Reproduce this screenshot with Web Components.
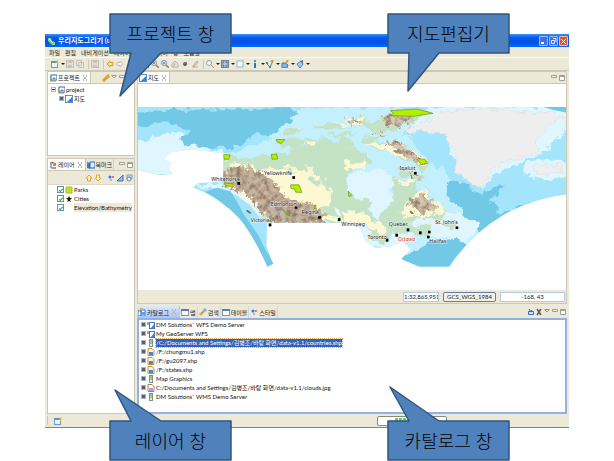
<!DOCTYPE html>
<html lang="ko">
<head>
<meta charset="utf-8">
<title>우리지도그리기</title>
<style>
  body {
    margin: 0; box-sizing: border-box; min-height: 100vh; background: #fff;
    padding: 34px 45px 33px; display: flex; flex-direction: column; position: relative;
    font: 6px/9px Lato, "Noto Sans CJK KR", sans-serif; color: #111;
  }
</style>
</head>
<body>
<app-window></app-window>
<call-out label="프로젝트 창" style="left:110px;top:14px" tail="21,39 10,82 51,39"></call-out>
<call-out label="지도편집기" style="right:105px;top:14px" tail="21,39 20,77 51,39"></call-out>
<call-out label="레이어 창" style="left:110px;bottom:1px" tail="51,0 5,-31 21,0"></call-out>
<call-out label="카탈로그 창" style="right:105px;bottom:1px" tail="51,0 2,-34 21,0"></call-out>

<template id="t-window">
  <style>
    :host { flex: 1; display: flex; flex-direction: column; background: #ece9d8; border-bottom: 1px solid #4a8ce8; }
    main { flex: 1; display: grid; grid-template-columns: 88px minmax(0, 1fr); gap: 2px; padding: 0 2px; }
    .left { display: grid; grid-template-rows: 85px 1fr; gap: 2px; }
    .right { display: grid; grid-template-rows: 1fr 108px; gap: 2px; }
    .tree { padding: 1px 3px; }
    .layers { padding: 0 9px; }
    .catalog { padding: 0 2px; }
  </style>
  <title-bar></title-bar>
  <menu-bar></menu-bar>
  <tool-bar></tool-bar>
  <main>
    <div class="left">
      <view-pane>
        <view-tab slot="tabs" icon="project" active closable>프로젝트</view-tab>
        <ui-icon slot="tools" name="link"></ui-icon>
        <ui-icon slot="tools" name="menu"></ui-icon>
        <ui-icon slot="tools" name="min"></ui-icon>
        <ui-icon slot="tools" name="max"></ui-icon>
        <div class="tree">
          <tree-row icon="project" open>project</tree-row>
          <tree-row icon="map" depth="1">지도</tree-row>
        </div>
      </view-pane>
      <view-pane>
        <view-tab slot="tabs" icon="layers" active closable>레이어</view-tab>
        <view-tab slot="tabs" icon="book">북마크</view-tab>
        <ui-icon slot="tools" name="min"></ui-icon>
        <ui-icon slot="tools" name="max"></ui-icon>
        <layer-tools></layer-tools>
        <div class="layers">
          <layer-row icon="square">Parks</layer-row>
          <layer-row icon="star">Cities</layer-row>
          <layer-row icon="none" current>Elevation/Bathymetry</layer-row>
        </div>
      </view-pane>
    </div>
    <div class="right">
      <view-pane>
        <view-tab slot="tabs" icon="map" active closable>지도</view-tab>
        <ui-icon slot="tools" name="min"></ui-icon>
        <ui-icon slot="tools" name="max"></ui-icon>
        <map-canvas></map-canvas>
        <map-status></map-status>
      </view-pane>
      <view-pane focused>
        <view-tab slot="tabs" icon="catalog" active closable focused>카탈로그</view-tab>
        <view-tab slot="tabs" icon="window">맵</view-tab>
        <view-tab slot="tabs" icon="torch">검색</view-tab>
        <view-tab slot="tabs" icon="window">테이블</view-tab>
        <view-tab slot="tabs" icon="palette">스타일</view-tab>
        <ui-icon slot="tools" name="import"></ui-icon>
        <ui-icon slot="tools" name="delete"></ui-icon>
        <ui-icon slot="tools" name="menu"></ui-icon>
        <ui-icon slot="tools" name="min"></ui-icon>
        <ui-icon slot="tools" name="max"></ui-icon>
        <div class="catalog">
          <tree-row icon="wfs">DM Solutions` WFS Demo Server</tree-row>
          <tree-row icon="wfs">My GeoServer WFS</tree-row>
          <tree-row icon="server" selected>/C:/Documents and Settings/김병조/바탕 화면/data-v1.1/countries.shp</tree-row>
          <tree-row icon="shp">/F:/chungmu1.shp</tree-row>
          <tree-row icon="shp">/F:/gu2097.shp</tree-row>
          <tree-row icon="shp">/F:/states.shp</tree-row>
          <tree-row icon="server">Map Graphics</tree-row>
          <tree-row icon="raster">C:/Documents and Settings/김병조/바탕 화면/data-v1.1/clouds.jpg</tree-row>
          <tree-row icon="server">DM Solutions` WMS Demo Server</tree-row>
        </div>
      </view-pane>
    </div>
  </main>
  <status-bar></status-bar>
</template>

<template id="t-map">
  <style>
    :host { flex: 1; display: flex; align-items: center; background: #fff; }
    svg { display: block; width: 100%; height: auto; }
    filter { color-interpolation-filters: sRGB; }
    text { font: 16px "Noto Sans", sans-serif; fill: #222; stroke: #fff; stroke-width: 3px; stroke-opacity: .7; paint-order: stroke; }
    .capital { fill: #e33; font-style: italic; }
  </style>
  <svg viewBox="21 21 1287 480" role="img" aria-label="Canada">
    <defs>
      <filter id="coast" x="-5%" y="-5%" width="110%" height="110%">
        <feTurbulence type="fractalNoise" baseFrequency=".035" numOctaves="4" seed="4"/>
        <feDisplacementMap in="SourceGraphic" scale="34" xChannelSelector="R" yChannelSelector="G"/>
      </filter>
      <filter id="relief" x="-5%" y="-5%" width="110%" height="110%">
        <feTurbulence type="fractalNoise" baseFrequency=".06" numOctaves="4" seed="9" result="n"/>
        <feDisplacementMap in="SourceGraphic" in2="n" scale="40" xChannelSelector="R" yChannelSelector="G" result="s"/>
        <feColorMatrix in="n" values="0 0 0 0 .55  0 0 0 0 .46  0 0 0 0 .4  2.5 0 0 0 -1" result="d"/>
        <feComposite in="d" in2="s" operator="in" result="shade"/>
        <feMerge><feMergeNode in="s"/><feMergeNode in="shade"/></feMerge>
      </filter>
      <filter id="speckle" x="-5%" y="-5%" width="110%" height="110%">
        <feTurbulence type="fractalNoise" baseFrequency=".03" numOctaves="4" seed="21" result="n"/>
        <feColorMatrix in="n" values="0 0 0 0 .77  0 0 0 0 .89  0 0 0 0 .76  0 9 0 0 -4.6" result="d"/>
        <feComposite in="d" in2="SourceGraphic" operator="in"/>
      </filter>
      <clipPath id="frame">
        <path d="M21 21H1308V283Q1200 298 1120 345Q1020 405 957 501H868L812 478L842 450L820 425L780 440L735 445L705 425L695 400L680 370H409L407 440L428 492L410 501Q370 410 325 355Q270 295 186 262L200 250L278 244V160L180 148L118 158L98 178L122 190L112 200L124 222L90 226L21 212Z"/>
      </clipPath>
      <path id="land" d="M277 165L300 160L330 178L400 166L430 158L470 162L500 140L560 132L600 150L650 142L690 150L725 185L690 200L655 215L645 260L680 290L715 300L722 340L745 362L765 325L780 300L785 270L770 245L800 232L850 250L872 275L885 258L905 300L950 335L930 358L870 355L835 378L880 372L900 390L870 412L835 402L800 400L760 430L735 425L720 395L690 375L640 372H408L385 335L360 300L320 266L277 262Z"/>
    </defs>
    <g clip-path="url(#frame)">
      <rect x="0" y="0" width="1330" height="520" fill="#a5e5fb"/>
      <g filter="url(#coast)">
        <path fill="#c4f0fe" d="M380 40L560 20L800 20L860 60L820 100L900 130L940 200L1000 330L1060 410L1000 440L850 470L700 460L240 380L280 160L420 120Z"/>
        <path fill="#dff6ff" d="M10 130L150 90L170 130L280 160L260 230L10 220Z"/>
        <path fill="#72c9e6" d="M10 35L120 30L480 25L500 45L440 90L350 115L300 145L180 140L140 120L180 95L130 75L90 60L10 85Z"/>
        <path fill="#dff6ff" d="M820 80L930 60L960 150L990 230L1060 270L1090 225L1180 185L1240 160L1310 90V20H900Z"/>
        <path fill="#a5e5fb" d="M830 110L920 125L960 180L920 210L870 150Z"/>
        <path fill="#72c9e6" d="M950 255L1000 245L1040 285L1130 252L1080 300L1110 345L1210 300L1230 310L1060 420L1020 380L985 320L950 285Z"/>
        <path fill="#a5e5fb" d="M1100 300L1190 230L1320 210V290L1180 320L1100 335Z"/>
        <path fill="#72c9e6" d="M820 470L900 430L970 420L1020 430L980 540H820Z"/>
        <ellipse cx="1250" cy="208" rx="70" ry="30" fill="#dff6ff"/>
        <path fill="#dff6ff" d="M930 330L1000 350L1055 370L1010 430L930 410L870 400L800 440L700 440L690 380L850 350Z"/>
        <path fill="#dff6ff" d="M180 250L300 255L350 290L420 370L410 410L390 350L340 320L280 270L230 270Z"/>
      </g>
      <path fill="#72c9e6" d="M222 276L260 264L300 275L330 320L370 375L395 430L428 492L405 510Q360 400 315 350Q270 300 222 276Z"/>
      <path fill="#a5e5fb" d="M305 280L345 300L380 345L409 370L407 440L412 465L385 410L340 345Z"/>
      <path fill="#72c9e6" d="M1230 18H1310V38L1270 30Z"/>
      <g filter="url(#coast)">
        <g fill="#c3e2c6">
          <use href="#land"/>
          <path d="M440 125L475 112L520 118L505 145L460 148ZM450 98L490 82L520 92L470 106ZM520 118L575 116L632 124L640 148L580 160L530 155ZM625 115L665 115L670 140L640 148ZM540 80L600 70L650 82L610 92ZM640 60L690 50L740 68L680 78ZM700 72L760 60L790 85L730 100ZM590 100L650 95L680 108L620 110ZM690 112L760 105L740 125L700 128ZM750 50L810 32L905 35L860 62L800 92L755 88ZM718 128L800 125L850 155L905 192L880 212L850 190L810 180L790 158L730 148ZM790 205L850 210L885 238L860 245L810 225ZM850 382L900 378L895 405L855 412ZM940 375L975 362L982 385L945 388Z"/>
        </g>
        <path fill="#dff6ff" d="M655 225L700 208L760 215L790 235L775 275L790 300L765 325L745 362L722 335L715 300L670 292L648 262Z"/>
      </g>
      <g filter="url(#coast)" fill="#fdf8d4">
        <path d="M290 180L330 190L400 212L470 200L550 205L580 240L605 280L600 310L560 330L640 365H430L300 260ZM640 335L700 340L740 365L770 395L740 400L690 372H640ZM820 310L880 265L945 335L870 355L810 345ZM640 185L700 180L700 205L650 205ZM700 130L790 130L870 165L890 200L830 175L740 145ZM790 240L850 245L830 260ZM640 55L700 55L690 75L650 70ZM520 125L560 125L550 140ZM600 70L660 72L640 82Z"/>
      </g>
      <g filter="url(#speckle)"><path d="M290 172L430 165L500 150L560 140L680 155L700 185L650 210L640 265L700 310L715 340L660 335L600 290L520 230L400 205L285 200ZM800 290L850 265L830 330L800 370L770 390Z"/></g>
      <g filter="url(#relief)">
        <path fill="#c8b59d" d="M280 205L340 200L390 215L440 255L470 300L540 310L580 340L585 372H425L380 325L350 285L280 258Z"/>
        <path fill="#d6c6ae" d="M755 50L830 30L850 60L800 80L760 72ZM640 55L690 60L690 68L655 68ZM730 100L770 102L740 110ZM760 126L810 132L890 190L870 195L820 165ZM830 312L880 275L920 325L870 345ZM840 215L870 232L860 240Z"/>
      </g>
      <path filter="url(#relief)" fill="#bdb9b4" d="M400 310L440 318L490 350L500 365L440 350Z" opacity=".7"/>
      <g fill="#f2f5f4"><path d="M320 272L345 290L365 315L345 308L325 292ZM475 240L500 232L505 242L480 250ZM610 320L625 330L633 350L620 345Z"/></g>
      <g filter="url(#coast)" fill="#eee" stroke="#ddd" stroke-width="2">
        <path d="M825 85L870 70L930 35L1070 25L1300 45L1250 80L1220 120L1220 160L1150 180L1100 200L1078 215L1060 262L1035 258L990 225L975 190L980 150L960 130L940 100L830 95Z"/>
        <path d="M1205 205L1225 195L1290 195L1298 210L1255 225L1215 220Z"/>
      </g>
      <g fill="#b3f000" stroke="#6f8c20" stroke-width="2">
        <path d="M780 32L860 27L908 40L850 49L778 47L790 40ZM278 164L298 165L294 178L280 178ZM280 249L308 253L306 261L284 257ZM436 119L462 119L452 131L440 127ZM422 163L438 163L441 177L424 178ZM480 255L505 255L514 278L495 277L492 268L481 266ZM653 274L664 287L655 290ZM860 177L882 178L892 190L872 194ZM455 328L480 350L462 338ZM551 316L556 316L556 326L551 326Z"/>
      </g>
      <path d="M348 332L360 341" stroke="#665f45" stroke-width="5"/>
    </g>
    <g fill="#000">
      <rect x="320" y="246" width="8" height="9"/><rect x="414" y="371" width="8" height="9"/>
      <rect x="485" y="229" width="8" height="8"/><rect x="492" y="319" width="8" height="8"/>
      <rect x="563" y="349" width="8" height="8"/><rect x="622" y="355" width="8" height="9"/>
      <rect x="766" y="417" width="8" height="9"/><rect x="795" y="402" width="8" height="9"/>
      <rect x="829" y="386" width="8" height="9"/><rect x="866" y="395" width="8" height="9"/>
      <rect x="893" y="393" width="8" height="8"/><rect x="890" y="408" width="8" height="8"/>
      <rect x="851" y="216" width="8" height="8"/><rect x="976" y="380" width="8" height="8"/>
    </g>
    <text x="241" y="244">Whitehorse</text>
    <text x="360" y="366">Victoria</text>
    <text x="400" y="225">Yellowknife</text>
    <text x="420" y="319">Edmonton</text>
    <text x="513" y="343">Regina</text>
    <text x="632" y="378">Winnipeg</text>
    <text x="711" y="417">Toronto</text>
    <text class="capital" x="803" y="424">Ottawa</text>
    <text x="775" y="379">Quebec</text>
    <text x="807" y="210">Iqaluit</text>
    <text x="915" y="373">St. John's</text>
    <text x="897" y="431">Halifax</text>
  </svg>
</template>

<script>
const ICONS = {
  logo: '<path d="M1 1h3l1 3 3 1v3H5L1 4z" fill="#7fd67f"/><path d="M2 2l4 4" stroke="#e8ffe8"/>',
  project: '<rect x="1" y="2" width="6" height="6" fill="#f0c860"/><rect x="2" y="1" width="6" height="5" fill="#fff" stroke="#3568b4"/><path d="M3 5l2-2 2 2z" fill="#3f9ae0"/>',
  map: '<rect x=".5" y=".5" width="7" height="7" fill="#fff" stroke="#5b8fc6"/><path d="M7 2v5H2z" fill="#2a83dc"/>',
  layers: '<path d="M1 1h3v2H1zM4 3h3v2H4zM4 6h3v2H4z" fill="#e08c3c"/><path d="M2 3v4h2M3 1l4 2" stroke="#3568b4" fill="none"/>',
  book: '<path d="M0 1l3 1v6L0 7z" fill="#2f7fd6"/><path d="M3 1h5v6H3z" fill="#dceeff" stroke="#2a62a8"/>',
  catalog: '<path d="M0 3h3v5H0zM3 2h4v6H3z" fill="#fff" stroke="#4a7ac0"/><path d="M4 4h3v3H4z" fill="#5aa4e8"/><path d="M2 0h3v2H2z" fill="#e8b24a"/>',
  window: '<rect x=".5" y="1.500" width="7" height="6" fill="#fff" stroke="#8093b8"/><path d="M0 1h8v2H0z" fill="#4d7fc8"/>',
  torch: '<path d="M1 7l4-4" stroke="#e0903c" stroke-width="2"/><path d="M4 2l2-2 2 2-2 2z" fill="#8aa9cf"/><path d="M0 5l3 3" stroke="#f0c050"/>',
  palette: '<circle cx="4" cy="4" r="3.500" fill="#dce9ff"/><circle cx="3" cy="3" r="1.500" fill="#3f6fe0"/><circle cx="6" cy="3" r="1" fill="#e84a3c"/><circle cx="4" cy="6" r="1" fill="#e8a030"/>',
  wfs: '<path d="M0 1h3v3H0z" fill="#88a8d0"/><rect x="2.500" y="1.500" width="5" height="6" fill="#fff" stroke="#3d76c8"/><path d="M7 3v4H4z" fill="#3c8ae0"/>',
  server: '<rect x="2.500" y=".5" width="3" height="7" fill="#e6eee6" stroke="#7d9484"/><path d="M3 2h2M3 4h2" stroke="#62936b"/>',
  shp: '<path d="M1 .5h4l2 2v5H1z" fill="#fff5d8" stroke="#c79338"/><path d="M2 4h4v3H2z" fill="#3d8be0"/>',
  raster: '<path d="M1 .5h4l2 2v5H1z" fill="#fff" stroke="#a88050"/><path d="M2 4h4v3H2z" fill="#b79be0"/>',
  square: '<path d="M1 1h6v6H1z" fill="#b3f000" stroke="#b8ae50"/>',
  star: '<path d="M4 1l1 2h2L5 5l1 2-2-1-2 1 1-2-2-2h2z" fill="#111"/>',
  none: '',
  link: '<path d="M3 4l3-3 1 2-3 2M5 4l-3 3-1-1 3-3" stroke="#dc9a2c" stroke-width="1.500" fill="none"/>',
  menu: '<path d="M1.500 1.500h5l-2.500 2.500z" fill="#fff" stroke="#a19f94"/>',
  min: '<path d="M1.500 1.500h5v2h-5z" fill="#fff" stroke="#a19f94"/>',
  max: '<path d="M1.500 1.500h5v5h-5zM1 2.500h6" fill="#fff" stroke="#a19f94"/>',
  close: '<path d="M2 2l4 4M6 2L2 6M2.500 1v2M5.500 1v2M2.500 5v2M5.500 5v2" stroke="#bbb9ae" fill="none"/>',
  import: '<path d="M1.500 3.500h5v3h-5z" fill="#cfe2fa" stroke="#3c74bc"/><path d="M2 1l2 3 1-2" stroke="#2a62a8" fill="none"/>',
  delete: '<path d="M2 1l4 6M6 1L2 7" stroke="#5e5e5e" stroke-width="1.500"/>',
  new: '<rect x=".5" y="1.500" width="6" height="6" fill="#eaf4ff" stroke="#6a9ac8"/><path d="M0 1h7v2H0z" fill="#5b93d4"/><path d="M5 2h3M6.500 0v4" stroke="#e8b53a"/>',
  save: '<rect x=".5" y=".5" width="7" height="7" fill="#e2e0d6" stroke="#c0beb2"/><path d="M2 1h4v2H2zM2 5h4v2H2z" fill="#c8c6bb"/>',
  copy: '<path d="M.5.5h5v5h-5zM2.500 2.500h5v5h-5z" fill="#eceae0" stroke="#c4c2b6"/>',
  back: '<path d="M4 1L.8 4 4 7V5.500h3v-3H4z" fill="#ffe48a" stroke="#d39a28"/>',
  fwd: '<path d="M4 1l3 3-3 3V5.500H1v-3h3z" fill="#f2f0e6" stroke="#c6c3b2"/>',
  up: '<path d="M4 1L1 4h1.500v3h3V4H7z" fill="#fff0b0" stroke="#dfa63c"/>',
  down: '<path d="M4 7L1 4h1.500V1h3v3H7z" fill="#fff0b0" stroke="#dfa63c"/>',
  zoom: '<circle cx="3" cy="3" r="2.500" fill="#d7eafc" stroke="#7d96b4"/><path d="M5 5l3 3" stroke="#a07840" stroke-width="1.500"/><path d="M2 3h2M3 2v2" stroke="#3560a8" stroke-width=".7"/>',
  find: '<circle cx="3" cy="3" r="2.500" fill="#f0f6fc" stroke="#9aa6b4"/><path d="M5 5l3 3" stroke="#b0976a"/>',
  extent: '<path d="M1 4l3-3 3 3v3H1z" fill="#eceae0" stroke="#b4b2a6"/><path d="M3 7V4h2" stroke="#b4b2a6" fill="none"/>',
  dot: '<circle cx="4" cy="4" r="2" fill="#53586c"/><path d="M2 4l4-2" stroke="#888"/>',
  edit: '<path d="M1 7h6" stroke="#c0ad98"/><path d="M2 6l4-5 1 1-4 5z" fill="#eee3d4" stroke="#bda88e"/>',
  pan: '<path d="M0 0h8v8H0z" fill="#6e8299"/><path d="M4 1v6M1 4h6" stroke="#c3e0f5"/><path d="M1 1h1v1H1zM6 1h1v1H6zM1 6h1v1H1zM6 6h1v1H6z" fill="#a9c6de"/>',
  select: '<rect x="1" y="1" width="6" height="6" fill="#fff" stroke="#80b4dc"/>',
  info: '<path d="M4 3v5" stroke="#2874c8" stroke-width="2"/><circle cx="4" cy="1" r="1" fill="#2874c8"/>',
  vertex: '<path d="M1 4l3 3 3-6" stroke="#6d7c6d" fill="none"/><path d="M0 2h2v2H0zM3 6h2v2H3z" fill="#3f80c8"/><path d="M5 2l2-2" stroke="#dc9a2c" stroke-width="2"/>',
  polygon: '<path d="M1 3l3 0 3 2-1 3H1z" fill="#77b6ec" stroke="#3f78b8"/><path d="M5 3l2-3" stroke="#e0a02c" stroke-width="2"/>',
  fill: '<path d="M1 4l4-3 2 3-3 4z" fill="#a2d0f4" stroke="#4c83bc"/><path d="M4 1l3-1v4" fill="#6d7480"/>',
  chart: '<path d="M1 7l6-6v6z" fill="#9cbce8" stroke="#3f6fb4"/>',
  zoomlayer: '<path d="M2 1h5v4H2z" fill="#b8d8f4" stroke="#7ea0c4"/><circle cx="4" cy="5" r="2" fill="#fff" stroke="#5f7ea8"/>'
};
const define = (name, build) => customElements.define(name, class extends HTMLElement {
  connectedCallback() {
    if (this.shadowRoot) return;
    const root = this.attachShadow({ mode: 'open' });
    const out = build(this);
    if (typeof out === 'string') root.innerHTML = out; else root.append(out);
  }
});
const template = id => () => document.getElementById(id).content.cloneNode(true);

define('ui-icon', el => `<style>:host{display:block;flex:none;width:8px;height:8px}svg{display:block}</style>
  <svg viewBox="0 0 8 8" width="8" height="8" aria-hidden="true">${ICONS[el.getAttribute('name')] || ''}</svg>`);

define('title-bar', () => `<style>
  :host{display:flex;align-items:center;height:13px;padding:0 1px 0 2px;gap:3px;color:#fff;font-weight:bold;font-size:7px;
    background:linear-gradient(#3f92ff,#0a5cea 25%,#0054e0 60%,#0068ff)}
  span{flex:1;white-space:nowrap}
  .btns{display:flex;gap:1px}
  button{width:9px;height:10px;padding:0;border:1px solid #9dbcf5;border-radius:1px;background:#3f70e4;display:grid;place-items:center}
  button.x{background:#e4532e;border-color:#f5b9a4}
  svg{display:block}</style>
  <ui-icon name="logo"></ui-icon><span>우리지도그리기 (uDig)</span>
  <div class="btns">
  <button aria-label="최소화"><svg width="7" height="8"><path d="M1 6h3" stroke="#fff" stroke-width="2"/></svg></button>
  <button aria-label="이전 크기로"><svg width="7" height="8"><path d="M1.500 3.500h3v3h-3zM3 1.500h3V5" fill="none" stroke="#dce8ff"/></svg></button>
  <button class="x" aria-label="닫기"><svg width="7" height="8"><path d="M1 2l5 5M6 2L1 7" stroke="#fff"/></svg></button></div>`);

define('menu-bar', () => `<style>
  :host{display:flex;gap:5px;height:10px;padding:0 4px;font-size:6px}
  button{all:unset;line-height:9px;white-space:nowrap;color:#222}</style>
  ${['파일', '편집', '내비게이션', '레이어', '지도', '데이터', '창', '도움말'].map(t => `<button>${t}</button>`).join('')}`);

define('tool-bar', () => {
  const btn = (i, drop) => `<button aria-label="${i}"${drop ? ' class="drop"' : ''}><ui-icon name="${i}"></ui-icon></button>`;
  const sep = '<i></i>';
  return `<style>
  :host{display:flex;align-items:center;box-sizing:border-box;height:14px;padding-left:6px;border-top:1px solid #fbfaf5;border-bottom:1px solid #cbc8b8}
  button{all:unset;width:10px;height:10px;display:flex;align-items:center;gap:2px}
  .drop{width:15px}
  .drop::after{content:"";border:2px solid transparent;border-top-color:#222;border-bottom:0}
  i{width:1px;height:9px;margin:0 2px;background:#cbc8b8}</style>`
  + btn('new', 1) + btn('save') + btn('copy') + sep + btn('save') + sep + btn('back') + btn('fwd') + sep
  + btn('zoom') + btn('zoom') + btn('zoom') + btn('zoom') + btn('extent') + btn('dot') + btn('edit') + sep
  + btn('find', 1) + btn('pan', 1) + btn('select', 1) + btn('info', 1) + btn('vertex', 1) + btn('polygon', 1) + btn('fill', 1);
});

define('view-pane', el => `<style>
  :host{display:flex;flex-direction:column;min-width:0;box-sizing:border-box;border:1px solid #cbc8b8;background:#fff}
  :host([focused]){border:0}
  header{display:flex;height:11px;background:#ece9d8;border-bottom:1px solid #cbc8b8}
  nav{display:flex;flex:1}
  .tools{display:flex;align-items:center}
  .body{flex:1;display:flex;flex-direction:column;min-height:0}
  :host([focused]) header{height:12px;border-bottom:0}
  :host([focused]) .body{border:2px solid #93b1e8}</style>
  <header><nav><slot name="tabs"></slot></nav><div class="tools"><slot name="tools"></slot></div></header>
  <div class="body"><slot></slot></div>`);

define('view-tab', el => `<style>
  :host{display:flex}
  button{all:unset;display:flex;align-items:center;gap:1px;padding:0 1px;white-space:nowrap;font-size:6px;color:#222;border-right:1px solid #d6d3c4}
  :host([active]) button{background:#fff;border-right-color:#cbc8b8}
  :host([focused]) button{background:linear-gradient(#dce8fc,#a9c3f2)}</style>
  <button><ui-icon name="${el.getAttribute('icon')}"></ui-icon><slot></slot>${el.hasAttribute('closable') ? '<ui-icon name="close"></ui-icon>' : ''}</button>`);

define('tree-row', el => `<style>
  :host{display:flex;align-items:center;height:9px;gap:1px;white-space:nowrap}
  :host([depth]){padding-left:8px}
  .box{flex:none;width:3px;height:3px;border:1px solid #a9b4c4;background:#5a5f68}
  :host([open]) .box{background:linear-gradient(#fff 1px,#333 1px 2px,#fff 2px)}
  .t{line-height:8px}
  :host([selected]) .t{background:#2f63bd;color:#fff;outline:1px dotted #d8a860}</style>
  <span class="box"></span><ui-icon name="${el.getAttribute('icon')}"></ui-icon><span class="t"><slot></slot></span>`);

define('layer-tools', () => `<style>
  :host{display:flex;justify-content:flex-end;align-items:center;height:13px;gap:1px;padding-right:1px;background:#ece9d8;border-bottom:1px solid #dedbcc}
  button{all:unset;display:block}
  .gap{margin-right:4px}</style>
  <button aria-label="위로"><ui-icon name="up"></ui-icon></button>
  <button aria-label="아래로" class="gap"><ui-icon name="down"></ui-icon></button>
  <button aria-label="스타일"><ui-icon name="palette"></ui-icon></button>
  <button aria-label="차트"><ui-icon name="chart"></ui-icon></button>
  <button aria-label="확대"><ui-icon name="zoomlayer"></ui-icon></button>`);

define('layer-row', el => `<style>
  :host{display:block}
  label{display:flex;align-items:center;height:9px;gap:1px;white-space:nowrap}
  input{appearance:none;box-sizing:border-box;flex:none;margin:0;width:7px;height:7px;border:1px solid #6a8cb0;background:#fff;display:grid;place-items:center}
  input:checked::after{content:"";width:3px;height:1px;border:solid #21a121;border-width:0 0 1px 1px;transform:rotate(-45deg)}
  :host([current]) .t{background:#ece9d8}</style>
  <label><input type="checkbox" checked><ui-icon name="${el.getAttribute('icon')}"></ui-icon><span class="t"><slot></slot></span></label>`);

define('map-canvas', template('t-map'));

define('map-status', () => `<style>
  :host{display:flex;justify-content:flex-end;align-items:center;gap:4px;height:13px;padding-right:1px;background:#ece9d8}
  input,button{box-sizing:border-box;height:10px;margin:0;padding:0;border:1px solid #b5cbe4;background:#fff;
    font:inherit;line-height:8px;text-align:center;color:#222}
  .scale{width:36px}.pos{width:65px}
  button{width:53px;border-color:#5f7f9f;border-radius:2px;background:#f3f2ea}</style>
  <input class="scale" aria-label="축척" value="1:32,865,951">
  <button>GCS_WGS_1984</button>
  <input class="pos" aria-label="좌표" value="-168, 43">`);

define('status-bar', () => `<style>
  :host{display:flex;align-items:center;height:13px;padding:0 2px;color:#333}
  .grip{width:1px;height:9px;background:#cbc8b8;margin-right:6px}
  .fill{flex:1}
  .bar{box-sizing:border-box;width:70px;height:10px;margin-right:120px;border:1px solid #8c8b82;border-radius:2px;background:#fff;padding:1px 17px}
  .bar div{height:100%;width:22px;background:repeating-linear-gradient(90deg,#4fe04f 0 3px,#fff 3px 4px)}</style>
  <span class="grip"></span><ui-icon name="new"></ui-icon><span class="fill"></span>
  <div class="bar" role="progressbar"><div></div></div>`);

define('call-out', el => {
  const [a, b, c] = el.getAttribute('tail').split(' ');
  const poly = a.endsWith(',0')
    ? `0,0 ${c} ${b} ${a} 121,0 121,39 0,39`
    : `0,0 121,0 121,39 ${c} ${b} ${a} 0,39`;
  return `<style>
  :host{position:absolute;box-sizing:border-box;width:121px;height:39px;padding-bottom:2px;display:grid;place-items:center;color:#000;
    font:300 18px/26px "Noto Sans CJK KR",sans-serif;white-space:nowrap}
  svg{position:absolute;left:0;top:0;overflow:visible}
  span{position:relative}</style>
  <svg width="121" height="39" aria-hidden="true"><polygon points="${poly}" fill="#4f81bd" stroke="#31557f" stroke-width="1.500" stroke-linejoin="round"/></svg>
  <span>${el.getAttribute('label')}</span>`;
});

define('app-window', template('t-window'));
</script>
</body>
</html>
